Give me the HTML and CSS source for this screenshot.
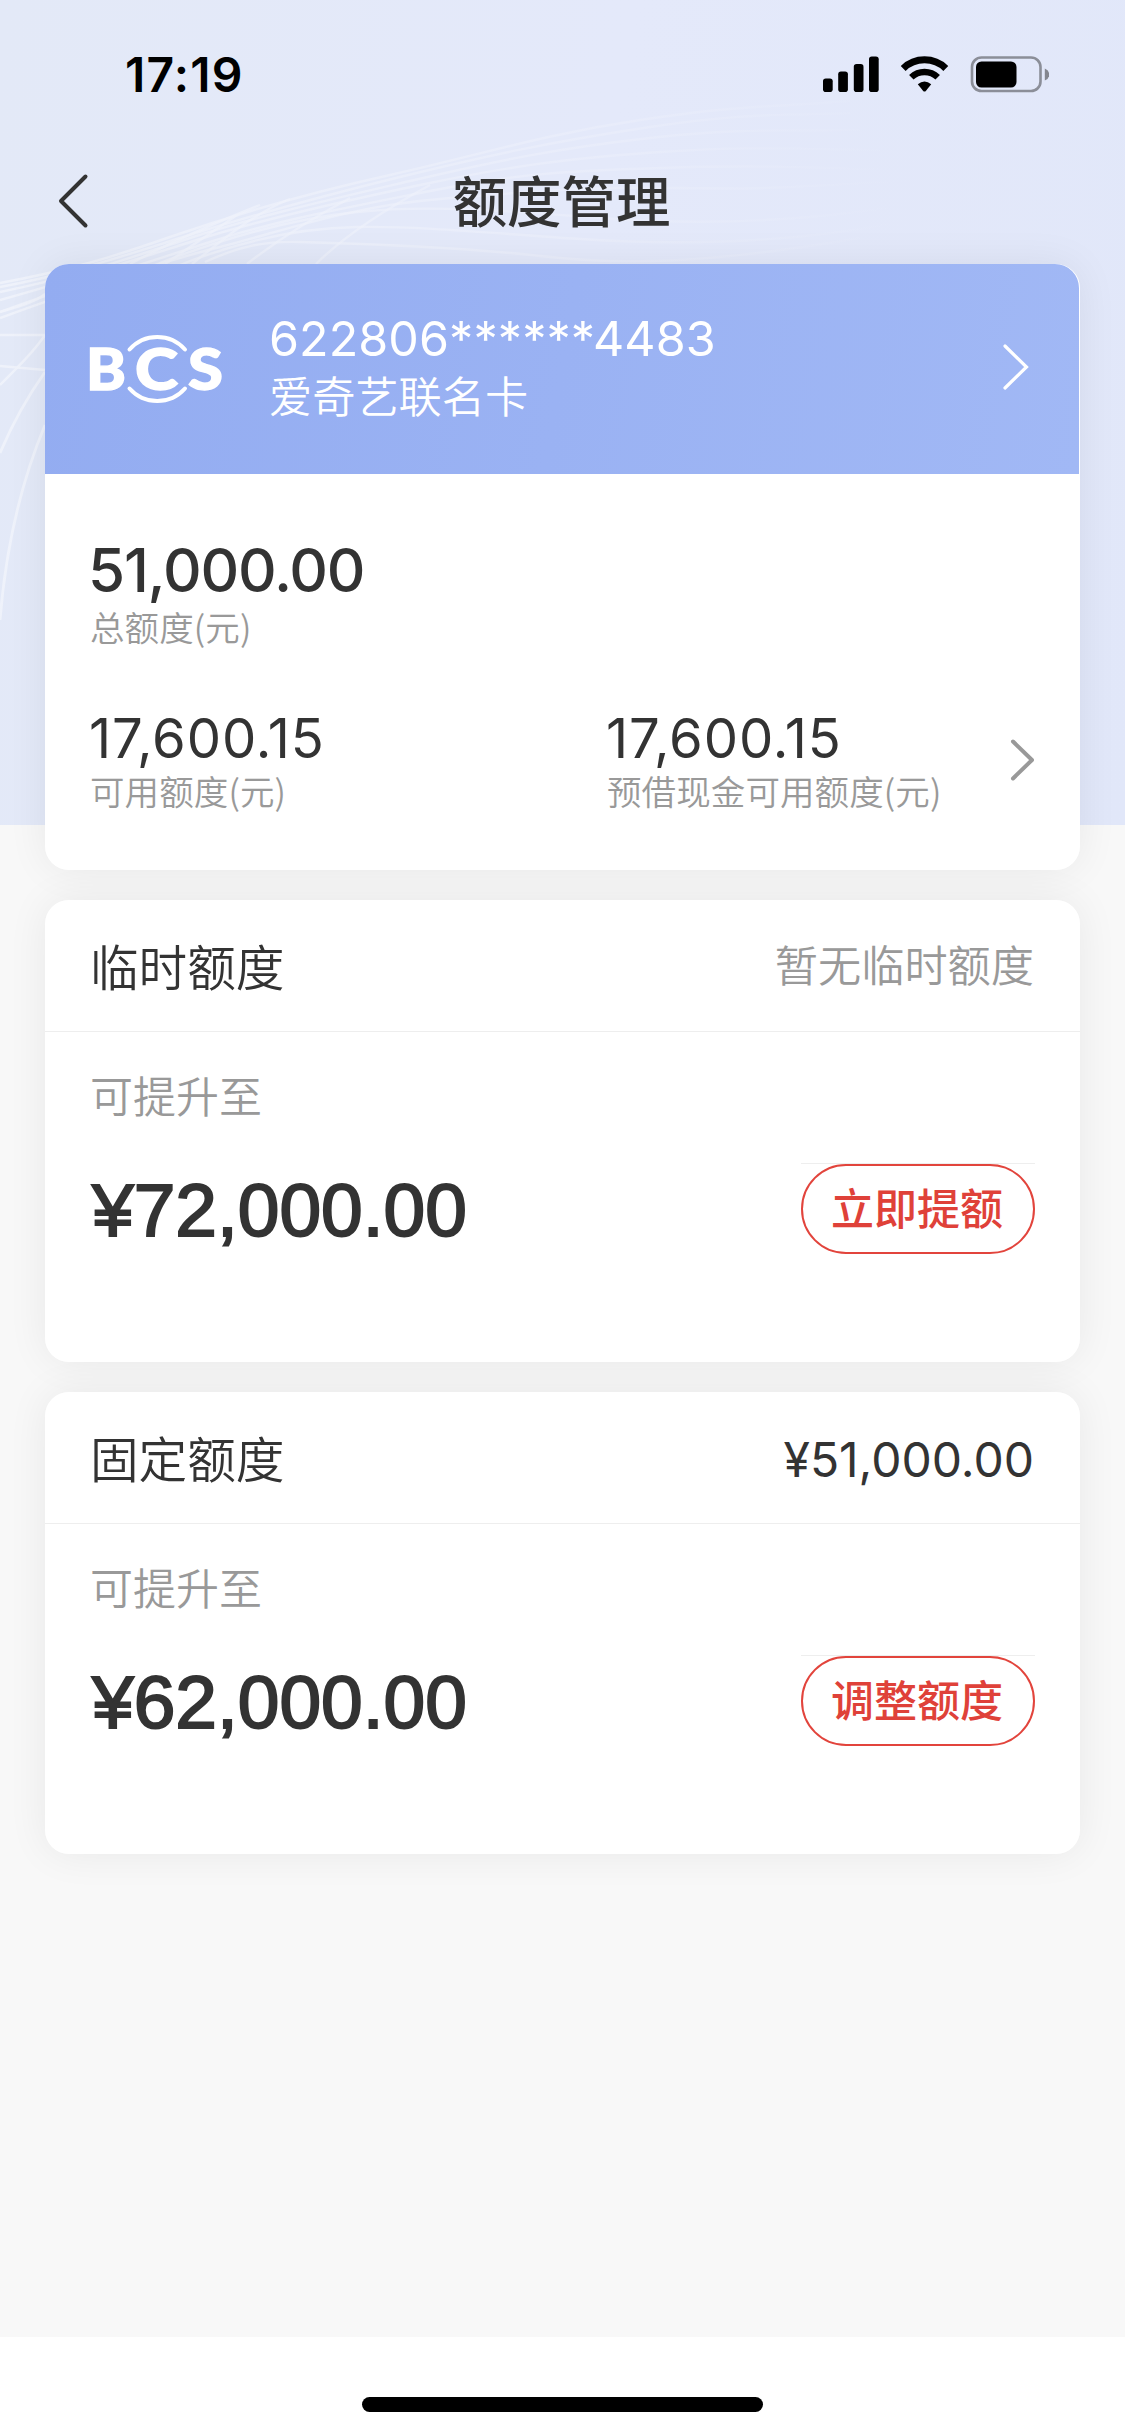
FILE: index.html
```
<!DOCTYPE html>
<html lang="zh-CN">
<head>
<meta charset="utf-8">
<title>额度管理</title>
<link rel="stylesheet" href="styles.css">
</head>
<body>
<div class="page">
  <div class="backdrop">
    <svg class="waves" width="1125" height="825" viewBox="0 0 1125 825" fill="none">
      <defs>
        <linearGradient id="fade" gradientUnits="userSpaceOnUse" x1="0" y1="0" x2="900" y2="0">
          <stop offset="0" stop-color="#f0f3fb" stop-opacity=".9"/>
          <stop offset=".4" stop-color="#eff2fb" stop-opacity=".6"/>
          <stop offset=".65" stop-color="#edf0fb" stop-opacity=".5"/>
          <stop offset="1" stop-color="#edf0fb" stop-opacity="0"/>
        </linearGradient>
      </defs>
      <g stroke="url(#fade)" stroke-width="2.4">
        <path d="M0 283C70 270 110 258 170 237S300 195 390 175S540 135 640 120S760 108 850 101"/>
        <path d="M0 287C70 274 120 257 180 238S310 199 400 177S550 142 650 127S780 116 850 113"/>
        <path d="M0 292C80 276 130 258 190 238S320 202 410 181S560 148 650 138S780 131 860 130"/>
        <path d="M0 300C80 278 140 258 200 239S330 204 420 185S570 158 660 152S800 149 880 150"/>
        <path d="M0 312C70 286 150 262 210 242S340 209 430 191S570 171 660 168S800 167 900 170"/>
        <path d="M0 318C60 296 160 262 220 247S350 206 440 199S580 186 680 188S820 185 920 180"/>
        <path d="M0 335L45 335M150 267C210 243 280 220 357 212S520 212 600 218S780 225 900 206"/>
        <path d="M180 265C230 245 290 228 357 227S500 234 580 239S780 246 900 222"/>
        <path d="M0 385C20 365 35 350 45 335M205 262C240 246 265 241 300 242S460 247 540 256S700 265 860 238"/>
        <path d="M0 312C20 306 35 302 45 294M0 366L45 370"/>
        <path d="M130 264C165 245 210 225 260 205M165 264L240 213M192 264C215 246 250 215 290 199M247 264C270 246 305 222 350 198M316 264C340 240 375 215 430 185"/>
        <path d="M0 453C14 420 28 396 45 372M45 425C22 480 6 545 0 620" stroke-width="2.8"/>
      </g>
    </svg>
  </div>

  <div class="statusbar">
    <span class="clock">17:19</span>
    <svg width="226" height="38" viewBox="0 0 226 38">
      <rect x="0" y="23.500" width="9.700" height="13.500" rx="2.800"/>
      <rect x="15.200" y="16.500" width="9.700" height="20.500" rx="2.800"/>
      <rect x="30.800" y="9" width="9.700" height="28" rx="2.800"/>
      <rect x="46" y="1.500" width="9.700" height="35.500" rx="2.800"/>
      <g fill="none" stroke="#000">
        <path d="M80.200 13.400A30.600 30.600 0 0 1 122.800 13.400" stroke-width="7"/>
        <path d="M88.300 22.300A19 19 0 0 1 114.700 22.300" stroke-width="6.400"/>
      </g>
      <path d="M94.800 29.200Q101.500 23.600 108.200 29.200L103 35.700Q101.500 37.400 100 35.700Z"/>
      <rect x="149" y="2.500" width="68.500" height="33.500" rx="9.500" fill="none" stroke="#8b8e98" stroke-width="2.600"/>
      <rect x="153" y="6.500" width="40.500" height="26" rx="5.500"/>
      <path d="M221.800 13.500Q226.200 15 226.200 19.500T221.800 25.500Z" fill="#84868f"/>
    </svg>
  </div>

  <header class="navbar">
    <svg class="back" width="34" height="56" viewBox="0 0 34 56" fill="none" stroke="#333" stroke-width="4" stroke-linecap="round" stroke-linejoin="round"><path d="M28.500 3.500L4 28L28.500 52.500"/></svg>
    <h1 class="title">额度管理</h1>
  </header>

  <main class="cards">
    <section class="card">
      <div class="bank">
        <svg class="logo" width="134" height="76" viewBox="0 0 134 76">
          <g class="logo-text">
            <text x="-4" y="58.500" textLength="40" lengthAdjust="spacingAndGlyphs">B</text>
            <text x="45" y="58.500" textLength="43" lengthAdjust="spacingAndGlyphs">C</text>
            <text x="98" y="58.500" textLength="35" lengthAdjust="spacingAndGlyphs">S</text>
          </g>
          <g fill="none" stroke="#fff" stroke-width="4" stroke-linecap="round">
            <path d="M39.500 18.500A37 37 0 0 1 95 18.500"/>
            <path d="M39.500 57.500A37 37 0 0 0 95 57.500"/>
          </g>
        </svg>
        <div class="bank-info">
          <div class="card-no">622806******4483</div>
          <div class="card-name">爱奇艺联名卡</div>
        </div>
        <svg class="bank-go" width="28" height="48" viewBox="0 0 28 48" fill="none" stroke="#fff" stroke-width="3.200" stroke-linecap="round"><path d="M3 3L24.500 24L3 45"/></svg>
      </div>
      <div class="summary">
        <div class="total">51,000.00</div>
        <div class="label">总额度(元)</div>
        <div class="limits">
          <div class="limit"><div class="value">17,600.15</div><div class="label">可用额度(元)</div></div>
          <div class="limit"><div class="value">17,600.15</div><div class="label">预借现金可用额度(元)</div></div>
          <svg class="limits-go" width="26" height="42" viewBox="0 0 26 42" fill="none" stroke="#999" stroke-width="4" stroke-linecap="round" stroke-linejoin="round"><path d="M3 2.500L22 21L3 39.500"/></svg>
        </div>
      </div>
    </section>

    <section class="card">
      <div class="card-head"><h2 class="card-title">临时额度</h2><span class="card-note">暂无临时额度</span></div>
      <div class="card-body">
        <div class="hint">可提升至</div>
        <div class="raise"><span class="amount">¥72,000.00</span><div class="action"><button class="btn">立即提额</button></div></div>
      </div>
    </section>

    <section class="card">
      <div class="card-head"><h2 class="card-title">固定额度</h2><span class="card-sum">¥51,000.00</span></div>
      <div class="card-body">
        <div class="hint">可提升至</div>
        <div class="raise"><span class="amount">¥62,000.00</span><div class="action"><button class="btn">调整额度</button></div></div>
      </div>
    </section>
  </main>

  <footer class="home"><div class="home-bar"></div></footer>
</div>
</body>
</html>
```
FILE: styles.css
```
* { box-sizing: border-box; margin: 0; padding: 0; }

body {
  background: #f8f8f8;
  color: #333;
  font-family: "Noto Sans CJK SC", sans-serif;
}

.page {
  position: relative;
  isolation: isolate;
  display: flex;
  flex-direction: column;
  width: 1125px;
  height: 2435px;
  overflow: hidden;
}

/* blue area behind the top of the page */
.backdrop {
  position: absolute;
  top: 0;
  left: 0;
  z-index: -2;
  width: 1125px;
  height: 825px;
  background: linear-gradient(100deg, #e3e9f7 0%, #e4e9fa 50%, #e1e7f9 100%);
}
.waves { display: block; }

.statusbar {
  display: flex;
  justify-content: space-between;
  align-items: flex-start;
  height: 138px;
  padding: 55px 76px 0 125px;
}
.clock {
  font: 600 48px/40px Inter, sans-serif;
  letter-spacing: 1.2px;
  color: #000;
}

.navbar {
  display: grid;
  grid-template-columns: 200px 1fr 200px;
  align-items: center;
  height: 126px;
}
.back { margin-left: 57px; }
.title {
  font-size: 54.4px;
  font-weight: 500;
  line-height: 80px;
  text-align: center;
  padding: 0 2px 4px 0;
}

.cards {
  display: flex;
  flex-direction: column;
  gap: 30px;
  padding: 0 45px;
}
.card {
  position: relative;
  background: #fff;
  border-radius: 24px;
}
/* shadow layer kept below every card */
.card::before {
  content: "";
  position: absolute;
  inset: 0;
  z-index: -1;
  border-radius: 24px;
  box-shadow: 0 0 42px rgba(0, 0, 0, .065);
}

.bank {
  display: flex;
  height: 210px;
  margin-right: 1px;
  padding-left: 45px;
  border-radius: 24px 24px 0 0;
  background: linear-gradient(100deg, #93acf1, #a1b8f5);
  color: #fff;
}
.logo { margin-top: 67px; overflow: visible; }
.logo-text {
  font: 900 58px Lato, sans-serif;
  fill: #fff;
  stroke: #fff;
  stroke-width: 1.4px;
}
.bank-info { flex: 1; padding: 45px 0 0 45px; }
.card-no { font: 400 48.4px/60px Inter, sans-serif; letter-spacing: .1px; }
.card-name { font-size: 43.2px; font-weight: 350; line-height: 50px; }
.bank-go { margin: 79px 49px 0 0; }

.summary { height: 396px; padding: 60px 0 0 45px; }
.total {
  margin-left: -2px;
  font: 500 60px/72px Inter, sans-serif;
  letter-spacing: -1.2px;
}
.label {
  font-size: 34.5px;
  font-weight: 350;
  line-height: 40px;
  letter-spacing: .1px;
  color: #999;
}
.limits {
  display: grid;
  grid-template-columns: 517px 403px 26px;
  align-items: center;
  margin-top: 62px;
}
.value {
  margin-left: -1px;
  font: 400 54.4px/60px Inter, sans-serif;
  letter-spacing: .9px;
}
.limits .label { line-height: 44px; }

.card-head {
  display: flex;
  justify-content: space-between;
  height: 132px;
  padding: 0 46px 0 45px;
  border-bottom: 1px solid #eee;
}
.card-title { font-size: 48.6px; font-weight: 350; line-height: 131px; }
.card-note { font-size: 43.2px; font-weight: 350; line-height: 126px; color: #999; }
.card-sum { font: 400 48px/135px Inter, sans-serif; }

.card-body { height: 330px; padding: 32px 45px 0 45px; }
.hint { font-size: 43px; font-weight: 350; line-height: 60px; color: #999; }
.raise {
  display: flex;
  justify-content: space-between;
  margin-top: 39px;
}
.amount {
  margin-left: 2px;
  padding-top: 2px;
  font: 400 74.9px/90px "Liberation Sans", Arial, sans-serif;
  -webkit-text-stroke: 2px #333;
}
.action { border-top: 1px solid #eee; }
.btn {
  display: block;
  width: 234px;
  height: 90px;
  padding: 0 2px 6px 0;
  border: 2px solid #e2443c;
  border-radius: 45px;
  background: transparent;
  color: #df4139;
  font: 500 43px/80px "Noto Sans CJK SC", sans-serif;
}

.home {
  display: flex;
  justify-content: center;
  height: 98px;
  margin-top: auto;
  padding-top: 60px;
  background: #fff;
}
.home-bar { width: 401px; height: 15px; border-radius: 8px; background: #000; }
```
